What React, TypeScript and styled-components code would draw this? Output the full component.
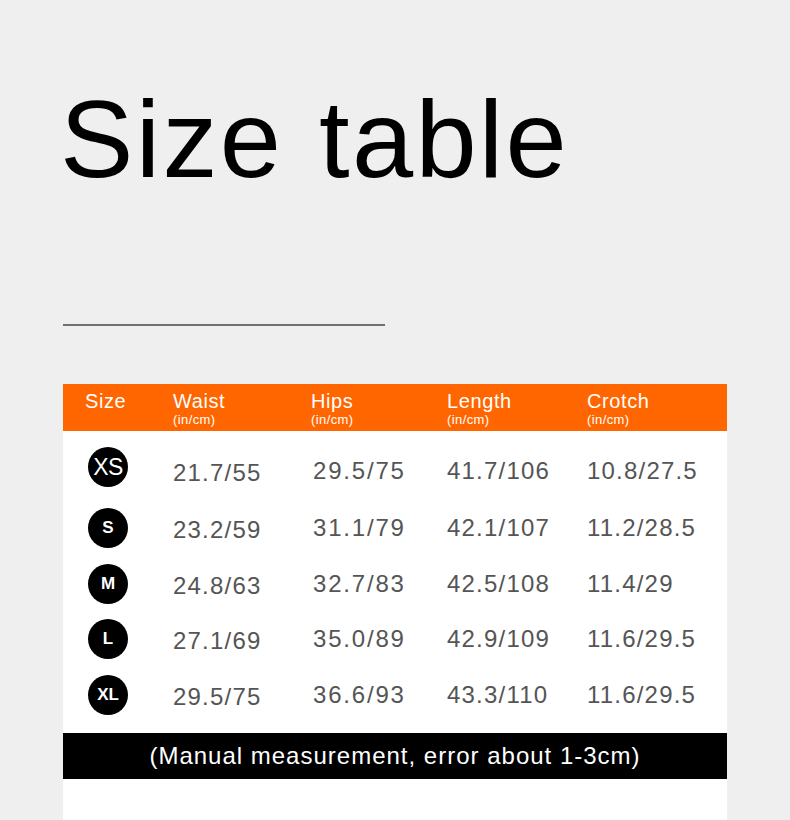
import React from "react";
import styled, { createGlobalStyle } from "styled-components";

const GlobalStyle = createGlobalStyle`
  html, body {
    margin: 0;
    padding: 0;
    background: #efefef;
  }
  body {
    font-family: "Liberation Sans", Arial, Helvetica, sans-serif;
  }
`;

const Page = styled.div`
  width: 790px;
  padding: 84px 63px 0 63px;
  box-sizing: border-box;
`;

const Title = styled.h1`
  margin: 0 0 0 -3px;
  font-size: 110px;
  line-height: 110px;
  font-weight: 400;
  letter-spacing: 2.3px;
  word-spacing: 3px;
  color: #000;
`;

const Rule = styled.div`
  width: 322px;
  height: 2px;
  background: #707070;
  margin-top: 130px;
`;

const Table = styled.div`
  margin-top: 58px;
  width: 664px;
  background: #ffffff;
  padding-bottom: 60px;
`;

const columns = "110px 138px 136px 140px 1fr";

const HeaderRow = styled.div`
  display: grid;
  grid-template-columns: ${columns};
  height: 47px;
  background: #ff6600;
  color: #fff;
  box-sizing: border-box;
  padding-top: 7px;
`;

const HeaderCell = styled.div<{ $indent?: number }>`
  padding-left: ${(p) => p.$indent ?? 0}px;
  display: flex;
  flex-direction: column;
`;

const HeaderLabel = styled.div`
  font-size: 20px;
  line-height: 20px;
  height: 20px;
  letter-spacing: 0.6px;
`;

const HeaderUnit = styled.div`
  font-size: 13px;
  line-height: 17px;
  height: 17px;
  letter-spacing: 0.4px;
`;

const Body = styled.div`
  display: flex;
  flex-direction: column;
  gap: 15.5px;
  padding: 16px 0 18px 0;
`;

const Row = styled.div<{ $extra?: number }>`
  display: grid;
  grid-template-columns: ${columns};
  height: 40px;
  margin-bottom: ${(p) => p.$extra ?? 0}px;
`;

const Badge = styled.div<{ $bold?: boolean; $size: number }>`
  width: 40px;
  height: 40px;
  border-radius: 50%;
  background: #000;
  color: #fff;
  margin-left: 25px;
  display: flex;
  align-items: center;
  justify-content: center;
  font-size: ${(p) => p.$size}px;
  font-weight: ${(p) => (p.$bold ? 700 : 400)};
  letter-spacing: ${(p) => (p.$bold ? "0" : "-0.5px")};
`;

const Value = styled.div<{ $drop: number; $inset: number; $track: number }>`
  padding-top: ${(p) => p.$drop}px;
  padding-left: ${(p) => p.$inset}px;
  font-size: 24px;
  line-height: 24px;
  letter-spacing: ${(p) => p.$track}px;
  color: #555555;
  white-space: nowrap;
`;

const Note = styled.div`
  height: 46px;
  background: #000;
  color: #fff;
  display: flex;
  align-items: center;
  justify-content: center;
  font-size: 24px;
  letter-spacing: 1px;
`;

type SizeRow = {
  label: string;
  bold: boolean;
  badgeSize: number;
  values: string[];
};

const rows: SizeRow[] = [
  { label: "XS", bold: false, badgeSize: 23, values: ["21.7/55", "29.5/75", "41.7/106", "10.8/27.5"] },
  { label: "S", bold: true, badgeSize: 17, values: ["23.2/59", "31.1/79", "42.1/107", "11.2/28.5"] },
  { label: "M", bold: true, badgeSize: 17, values: ["24.8/63", "32.7/83", "42.5/108", "11.4/29"] },
  { label: "L", bold: true, badgeSize: 17, values: ["27.1/69", "35.0/89", "42.9/109", "11.6/29.5"] },
  { label: "XL", bold: true, badgeSize: 17, values: ["29.5/75", "36.6/93", "43.3/110", "11.6/29.5"] },
];

const headers = ["Waist", "Hips", "Length", "Crotch"];

// per-column text placement: [inset, tracking]
const colStyle = [
  { inset: 0, track: 1.2, lower: 2 },
  { inset: 2, track: 1.8, lower: 0 },
  { inset: 0, track: 1.2, lower: 0 },
  { inset: 0, track: 1.2, lower: 0 },
];

export default function App() {
  return (
    <>
      <GlobalStyle />
      <Page>
        <Title>Size table</Title>
        <Rule />
        <Table>
          <HeaderRow>
            <HeaderCell $indent={22}>
              <HeaderLabel>Size</HeaderLabel>
            </HeaderCell>
            {headers.map((h) => (
              <HeaderCell key={h}>
                <HeaderLabel>{h}</HeaderLabel>
                <HeaderUnit>(in/cm)</HeaderUnit>
              </HeaderCell>
            ))}
          </HeaderRow>
          <Body>
            {rows.map((r, i) => (
              <Row key={r.label} $extra={i === 0 ? 5.5 : 0}>
                <Badge $bold={r.bold} $size={r.badgeSize}>
                  {r.label}
                </Badge>
                {r.values.map((v, j) => (
                  <Value
                    key={j}
                    $drop={(i === 0 ? 12 : 8) + colStyle[j].lower}
                    $inset={colStyle[j].inset}
                    $track={colStyle[j].track}
                  >
                    {v}
                  </Value>
                ))}
              </Row>
            ))}
          </Body>
          <Note>(Manual measurement, error about 1-3cm)</Note>
        </Table>
      </Page>
    </>
  );
}
